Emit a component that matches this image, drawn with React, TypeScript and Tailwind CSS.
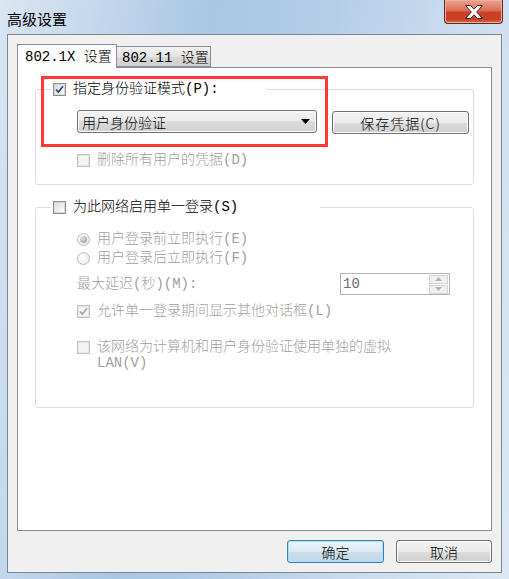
import React from "react";

function CheckBox({ checked = false, disabled = false }: any) {
    return (
        <span
            className={`flex h-[13px] w-[13px] shrink-0 items-center justify-center border bg-white ${
                disabled ? "border-[#c2c2c2]" : "border-[#8e8f8f]"
            }`}
        >
            <span
                className={`flex h-[11px] w-[11px] items-center justify-center border ${
                    disabled
                        ? "border-[#e6e6e6] bg-[#f4f4f4]"
                        : "border-[#d8d8d8] bg-[linear-gradient(135deg,#dcdcdc,#ffffff)]"
                }`}
            >
                {checked && (
                    <svg width="9" height="9" viewBox="0 0 9 9">
                        <path
                            d="M1 4.5L3.3 7.2L8 1.2"
                            fill="none"
                            stroke={disabled ? "#a8a8a8" : "#2b4a92"}
                            strokeWidth="1.8"
                        />
                    </svg>
                )}
            </span>
        </span>
    );
}

function Radio({ checked = false }: any) {
    return (
        <span className="flex h-[13px] w-[13px] shrink-0 items-center justify-center rounded-full border border-[#bdbdbd] bg-[radial-gradient(circle_at_40%_40%,#ffffff,#e4e4e4)]">
            {checked && (
                <span className="h-[7px] w-[7px] rounded-full bg-[radial-gradient(circle_at_35%_35%,#e4e4e4,#8e8e8e)]" />
            )}
        </span>
    );
}

function Button({ children, primary = false, className = "" }: any) {
    return (
        <div
            className={`flex h-[23px] items-center justify-center rounded-[3px] border ${
                primary
                    ? "border-[#3c7fb1] bg-[linear-gradient(#eaf3f9_0%,#dde9f2_50%,#ccdeec_50%,#c2d7e8_100%)] shadow-[inset_0_0_0_1px_#a3e1f7]"
                    : "border-[#707070] bg-[linear-gradient(#f2f2f2_0%,#ebebeb_50%,#dddddd_50%,#cfcfcf_100%)] shadow-[inset_0_0_0_1px_#fbfbfb]"
            } ${className}`}
        >
            {children}
        </div>
    );
}

export default function App() {
    return (
        <div className="flex h-[579px] w-[509px] flex-col overflow-hidden bg-[linear-gradient(100deg,#d9e6f3_0%,#c6d9ed_15%,#a9c6e3_35%,#b5cee8_55%,#cadcef_75%,#dce8f4_100%)] font-['Liberation_Mono','Noto_Sans_CJK_SC',monospace] text-[14px] font-light leading-[16px] text-black">
            {/* title bar */}
            <div className="flex h-[34px] items-start justify-between">
                <div className="pl-[7px] pt-[10px] font-['Noto_Sans_CJK_SC',sans-serif] text-[15px] font-normal leading-[18px]">
                    高级设置
                </div>
                <div className="mr-[6px] flex h-[24px] w-[59px] items-center justify-center rounded-b-[4px] border border-t-0 border-[#5d2a22] bg-[linear-gradient(#eba592_0%,#dc6f57_45%,#c93e25_55%,#c8432a_85%,#db6e55_100%)] shadow-[inset_0_0_0_1px_#efae9e]">
                    <svg width="20" height="14" viewBox="0 0 20 14">
                        <path
                            d="M1.5 0.5H6.5L10 4.2L13.5 0.5H18.5L12.7 7L18.5 13.5H13.5L10 9.8L6.5 13.5H1.5L7.3 7Z"
                            fill="#ffffff"
                            stroke="#4a2620"
                            strokeWidth="1"
                        />
                    </svg>
                </div>
            </div>

            {/* client area */}
            <div className="mx-[7px] flex h-[539px] flex-col border border-[#7d8690] bg-[#f0f0f0] px-[9px] pt-[9px]">
                {/* tabs */}
                <div className="flex h-[23px] items-end">
                    <div className="relative z-10 mb-[-1px] h-[24px] w-[100px] border border-b-0 border-[#898c95] bg-white pl-[7px] pt-[4px]">
                        802.1X 设置
                    </div>
                    <div className="h-[21px] w-[94px] border border-l-0 border-[#898c95] bg-[linear-gradient(#f3f3f3,#e3e3e3_50%,#d9d9d9_50%,#cfcfcf)] pl-[5px] pt-[3px]">
                        802.11 设置
                    </div>
                </div>

                {/* panel */}
                <div className="relative h-[464px] border border-[#898c95] bg-white">
                    <fieldset className="mx-[17px] mt-[11px] rounded-[3px] border border-[#d5dfe5] p-0 pb-[16px]">
                        <legend className="ml-[15px] flex h-[20px] items-center pl-[2px] pr-[48px]">
                            <CheckBox checked />
                            <span className="ml-[7px]">指定身份验证模式(P):</span>
                        </legend>
                        <div className="pl-[41px]">
                            <div className="mt-[11px] flex items-start gap-[15px]">
                                <div className="flex h-[23px] w-[240px] items-center justify-between rounded-[3px] border border-[#707070] bg-[linear-gradient(#f2f2f2_0%,#ebebeb_50%,#dddddd_50%,#cfcfcf_100%)] pl-[4px] pr-[6px] shadow-[inset_0_0_0_1px_#fbfbfb]">
                                    <span className="font-['Noto_Sans_CJK_SC',sans-serif]">用户身份验证</span>
                                    <svg width="9" height="5" viewBox="0 0 9 5">
                                        <path d="M0 0H9L4.5 5Z" fill="#000000" />
                                    </svg>
                                </div>
                                <Button className="mt-[1px] w-[137px] font-['Noto_Sans_CJK_SC',sans-serif] tracking-[1px]">
                                    保存凭据(C)
                                </Button>
                            </div>
                            <div className="mt-[18px] flex h-[16px] items-center text-[#a0a0a0]">
                                <CheckBox disabled />
                                <span className="ml-[7px]">删除所有用户的凭据(D)</span>
                            </div>
                        </div>
                    </fieldset>

                    <fieldset className="mx-[17px] mt-[12px] rounded-[3px] border border-[#d5dfe5] p-0 pb-[36px]">
                        <legend className="ml-[15px] flex h-[20px] items-center pl-[2px] pr-[82px]">
                            <CheckBox />
                            <span className="ml-[7px]">为此网络启用单一登录(S)</span>
                        </legend>
                        <div className="pl-[41px] text-[#a0a0a0]">
                            <div className="mt-[14px] flex h-[16px] items-center">
                                <Radio checked />
                                <span className="ml-[7px]">用户登录前立即执行(E)</span>
                            </div>
                            <div className="mt-[3px] flex h-[16px] items-center">
                                <Radio />
                                <span className="ml-[7px]">用户登录后立即执行(F)</span>
                            </div>
                            <div className="mt-[7px] flex h-[22px] items-center">
                                <span className="w-[263px]">最大延迟(秒)(M):</span>
                                <div className="flex h-[22px] w-[110px] items-center justify-between border border-[#b4b4b4] bg-white pl-[2px] pr-[1px] text-[#6d6d6d]">
                                    <span>10</span>
                                    <div className="flex flex-col gap-[1px]">
                                        <div className="flex h-[9px] w-[19px] items-center justify-center border border-[#d4d4d4] bg-[#f0f0f0]">
                                            <svg width="7" height="4" viewBox="0 0 7 4">
                                                <path d="M0 4H7L3.5 0Z" fill="#b0b0b0" />
                                            </svg>
                                        </div>
                                        <div className="flex h-[9px] w-[19px] items-center justify-center border border-[#d4d4d4] bg-[#f0f0f0]">
                                            <svg width="7" height="4" viewBox="0 0 7 4">
                                                <path d="M0 0H7L3.5 4Z" fill="#b0b0b0" />
                                            </svg>
                                        </div>
                                    </div>
                                </div>
                            </div>
                            <div className="mt-[8px] flex h-[16px] items-center">
                                <CheckBox checked disabled />
                                <span className="ml-[7px]">允许单一登录期间显示其他对话框(L)</span>
                            </div>
                            <div className="mt-[20px] flex items-start">
                                <div className="flex h-[16px] items-center">
                                    <CheckBox disabled />
                                </div>
                                <span className="ml-[7px]">
                                    该网络为计算机和用户身份验证使用单独的虚拟
                                    <br />
                                    LAN(V)
                                </span>
                            </div>
                        </div>
                    </fieldset>

                    {/* highlight box */}
                    <div className="pointer-events-none absolute left-[23px] top-[8px] h-[71px] w-[287px] border-[3px] border-[#ff3838]" />
                </div>

                {/* buttons */}
                <div className="mt-[9px] flex justify-end gap-[12px] font-['Noto_Sans_CJK_SC',sans-serif]">
                    <Button primary className="w-[97px]">
                        确定
                    </Button>
                    <Button className="w-[96px]">取消</Button>
                </div>
            </div>
        </div>
    );
}
